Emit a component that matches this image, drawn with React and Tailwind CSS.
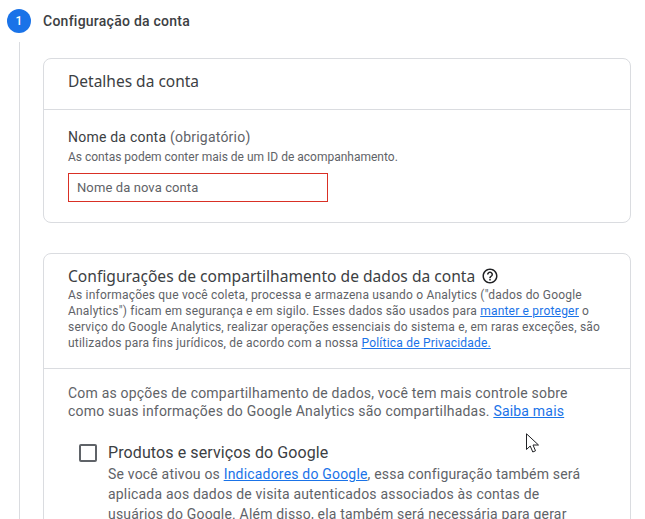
import React from "react";

const Link = ({ children, className = "" }) => (
  <a href="#" className={`text-[#1a73e8] underline ${className}`}>{children}</a>
);

export default function App() {
  return (
    <div className="relative h-[519px] w-[645px] overflow-hidden bg-white font-['Roboto',sans-serif] text-[#3c4043]">
      <div className="ml-[7px] mt-[9px] flex h-6 items-center gap-3">
        <div className="flex h-6 w-6 items-center justify-center rounded-full bg-[#1a73e8] text-xs font-medium text-white">1</div>
        <div className="text-sm font-medium leading-6 tracking-[0.25px] text-[#3c4043]">Configuração da conta</div>
      </div>
      <div className="ml-[19px] mt-[9px] border-l border-[#dadce0] pl-[23px] pt-[16px] pr-[14px]">
        <section className="h-[165px] rounded-lg border border-[#dadce0]">
          <h2 className="h-[51px] border-b border-[#dadce0] px-6 pt-[11px] font-['Noto_Sans',sans-serif] text-[15.5px] font-normal leading-[22px] text-[#3c4043]">Detalhes da conta</h2>
          <div className="px-6 pt-[17px]">
            <div className="text-sm leading-5 tracking-[0.22px] text-[#3c4043]">Nome da conta <span className="text-[#5f6368]">(obrigatório)</span></div>
            <p className="mt-[2px] text-xs leading-4 text-[#5f6368]">As contas podem conter mais de um ID de acompanhamento.</p>
            <div className="mt-[8px] flex h-[29px] w-[260px] items-center border border-[#d93025] px-2 text-[13px] tracking-[0.1px] text-[#5f6368]">Nome da nova conta</div>
          </div>
        </section>
        <section className="mt-[30px] h-[300px] rounded-t-lg border border-[#dadce0]">
          <div className="h-[115px] border-b border-[#dadce0] px-6 pt-[11px]">
            <h2 className="flex items-center gap-[6px] font-['Noto_Sans',sans-serif] text-[15.6px] font-normal leading-[22px] text-[#3c4043]">
              Configurações de compartilhamento de dados da conta
              <svg width="18" height="18" viewBox="0 0 24 24" fill="#202124"><path d="M11 18h2v-2h-2v2zm1-16C6.48 2 2 6.48 2 12s4.48 10 10 10 10-4.48 10-10S17.52 2 12 2zm0 18c-4.41 0-8-3.59-8-8s3.59-8 8-8 8 3.59 8 8-3.59 8-8 8zm0-14c-2.21 0-4 1.79-4 4h2c0-1.1.9-2 2-2s2 .9 2 2c0 2-3 1.75-3 5h2c0-2.25 3-2.5 3-5 0-2.21-1.79-4-4-4z"/></svg>
            </h2>
            <p className="text-xs leading-4 tracking-[0.2px] text-[#5f6368]">
              As informações que você coleta, processa e armazena usando o Analytics ("dados do Google
              <br />Analytics") ficam em segurança e em sigilo. Esses dados são usados para <Link>manter e proteger</Link> o
              <br />serviço do Google Analytics, realizar operações essenciais do sistema e, em raras exceções, são
              <br />utilizados para fins jurídicos, de acordo com a nossa <Link>Política de Privacidade.</Link>
            </p>
          </div>
          <div className="px-6 pt-[15px]">
            <p className="text-sm leading-[18px] tracking-[0.2px] text-[#5f6368]">
              Com as opções de compartilhamento de dados, você tem mais controle sobre
              <br />como suas informações do Google Analytics são compartilhadas. <Link>Saiba mais</Link>
            </p>
            <div className="mt-[23px] flex gap-[11px] pl-[11px]">
              <div className="mt-[1px] h-[18px] w-[18px] shrink-0 rounded-[2px] border-2 border-[#5f6368]"></div>
              <div>
                <div className="text-base leading-5 tracking-[0.1px] text-[#3c4043]">Produtos e serviços do Google</div>
                <p className="mt-[1px] text-sm leading-5 tracking-[0.19px] text-[#5f6368]">
                  Se você ativou os <Link>Indicadores do Google</Link>, essa configuração também será
                  <br />aplicada aos dados de visita autenticados associados às contas de
                  <br />usuários do Google. Além disso, ela também será necessária para gerar
                </p>
              </div>
            </div>
          </div>
        </section>
      </div>
      <svg className="absolute left-[526px] top-[433px]" width="14" height="21" viewBox="0 0 14 21">
        <path d="M0.5 0.8 V16.5 L4.2 13 L6.8 19 L9.5 17.8 L7 12 H12.5 Z" fill="#fff" stroke="#202124" strokeWidth="1"/>
      </svg>
    </div>
  );
}
